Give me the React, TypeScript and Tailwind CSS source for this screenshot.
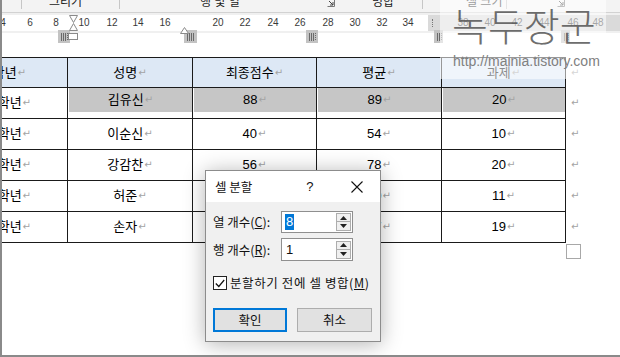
import React from "react";

const F = "font-['Liberation_Sans','Noto_Sans_CJK_KR',sans-serif]";

function PM() {
  return <span className="text-[#a3a3a3] text-[10px] leading-none ml-[1px] font-['DejaVu_Sans',sans-serif]">↵</span>;
}

function GridMark({ x, w = 12 }: { x: number; w?: number }) {
  return (
    <div className="absolute top-[17px]" style={{ left: x }}>
      <svg width={w} height={13} viewBox={`0 0 ${w} 13`}>
        <rect x="0" y="0" width={w} height="13" fill="#c3c3c3" />
        {[3, 5, 7, 9].filter((v) => v < w - 1).map((v) => (
          <line key={"v" + v} x1={v + 0.5} y1="3" x2={v + 0.5} y2="11" stroke="#6a6a6a" strokeWidth="1" strokeDasharray="1 1" />
        ))}
        {[4, 6, 8, 10].map((v) => (
          <line key={"h" + v} x1="3" y1={v + 0.5} x2={w - 3} y2={v + 0.5} stroke="#6a6a6a" strokeWidth="1" strokeDasharray="1 1" />
        ))}
      </svg>
    </div>
  );
}

const rulerNums: [number, string][] = [
  [3, "4"], [30, "6"], [56, "8"], [84, "10"], [112, "12"], [138, "14"], [165, "16"],
  [218, "20"], [245, "22"], [273, "24"], [300, "26"], [328, "28"], [355, "30"], [382, "32"],
  [408, "34"], [463, "38"], [490, "40"], [517, "42"], [544, "44"], [573, "46"], [598, "48"],
];

const widths = ["w-[109px]", "w-[125px]", "w-[124px]", "w-[125px]", "w-[124px]"];

const rows: string[][] = [
  ["1학년", "김유신", "88", "89", "20"],
  ["2학년", "이순신", "40", "54", "10"],
  ["3학년", "강감찬", "56", "78", "20"],
  ["1학년", "허준", "65", "70", "11"],
  ["2학년", "손자", "77", "67", "19"],
];

function Launcher() {
  return (
    <svg width="8" height="8" viewBox="0 0 8 8">
      <path d="M0.5 0.5 H7.5 V7.5 H0.5" fill="none" stroke="#777" strokeWidth="1" />
      <path d="M2 2 L6 6 M6 3 V6 H3" fill="none" stroke="#444" strokeWidth="1" />
    </svg>
  );
}

function Spinner() {
  return (
    <div className="flex flex-col w-[15px] h-[18px] gap-0">
      <div className="h-[9px] bg-[#f0f0f0] border border-[#adadad] flex items-center justify-center">
        <svg width="7" height="4" viewBox="0 0 7 4"><polygon points="0,4 3.5,0 7,4" fill="#222" /></svg>
      </div>
      <div className="h-[9px] bg-[#f0f0f0] border border-[#adadad] border-t-0 flex items-center justify-center">
        <svg width="7" height="4" viewBox="0 0 7 4"><polygon points="0,0 3.5,4 7,0" fill="#222" /></svg>
      </div>
    </div>
  );
}

export default function App() {
  return (
    <div className={`relative w-[620px] h-[357px] overflow-hidden bg-white ${F}`}>
      {/* ribbon */}
      <div className="flex h-[13px] bg-[#f3f3f3] border-b border-[#d2d2d2] overflow-hidden text-[12px] text-[#222]">
        <div className="w-[22px] shrink-0 h-[9px] border-r border-[#c6c6c6]" />
        <div className="w-[98px] shrink-0 h-[9px] border-r border-[#c6c6c6] flex justify-center">
          <span className="leading-[14px] -mt-[5px] -ml-[10px]">그리기</span>
        </div>
        <div className="w-[218px] shrink-0 h-[9px] flex items-start">
          <span className="leading-[14px] -mt-[5px] ml-[80px]">행 및 열</span>
          <div className="ml-auto mr-[3px] -mt-[1px]"><Launcher /></div>
        </div>
        <div className="w-[85px] shrink-0 h-[9px] border-r border-[#c6c6c6] flex">
          <span className="leading-[14px] -mt-[5px] ml-[34px]">병합</span>
        </div>
        <div className="w-[84px] shrink-0 h-[9px] border-r border-[#c6c6c6] flex">
          <span className="leading-[14px] -mt-[5px] ml-[43px]">셀 크기</span>
        </div>
        <div className="flex-1 h-[9px] flex">
          <div className="ml-[50px] -mt-[1px]"><Launcher /></div>
        </div>
      </div>

      {/* ruler */}
      <div className="relative h-[20px] bg-[#f0f0f0]">
        <div className="absolute left-0 top-[2px] w-[428px] h-[16px] bg-white" />
        <div className="absolute left-[428px] top-[2px] right-0 h-[16px] bg-[#dadada]" />
        <div className="absolute left-[432px] top-[6px] h-[8px] border-l border-dotted border-[#777]" />
        {rulerNums.map(([x, n]) => (
          <span key={n} className="absolute top-[4px] -translate-x-1/2 text-[10px] leading-[12px] text-[#3a3a3a]" style={{ left: x }}>
            {n}
          </span>
        ))}
        <GridMark x={58} />
        <GridMark x={184} w={13} />
        <GridMark x={306} />
        <GridMark x={434} w={9} />
        <GridMark x={561} w={9} />
        <svg className="absolute left-[67px] top-[2px]" width="12" height="26" viewBox="0 0 12 26">
          <polygon points="2.5,0.5 10.5,0.5 6.5,7.5" fill="#fff" stroke="#8a8a8a" />
          <polygon points="6.5,8.5 10.5,15.5 2.5,15.5" fill="#fff" stroke="#8a8a8a" />
          <rect x="1.5" y="18.5" width="9" height="6" fill="#fff" stroke="#8a8a8a" />
        </svg>
        <svg className="absolute left-[180px] top-[14px]" width="9" height="7" viewBox="0 0 9 7">
          <polygon points="0.5,6.5 4.5,0.5 8.5,6.5" fill="#fff" stroke="#8a8a8a" />
        </svg>
      </div>

      {/* table */}
      <div className="mt-[24px] -ml-[41px] w-[680px] text-[13px] text-black">
        <div className="w-[607px] border-t border-[#1a1a1a]">
          <div className="flex h-[30px] border-b border-[#1a1a1a]">
            {["학년", "성명", "최종점수", "평균", "과제"].map((h, i) => (
              <div
                key={h}
                className={`${widths[i]} shrink-0 border-r border-[#1a1a1a] bg-[#dde8f5] flex items-center ${i === 0 ? "justify-end pr-[41px]" : "justify-center"}`}
              >
                <span className="leading-[16px]">{h}</span>
                <PM />
              </div>
            ))}
            <div className="shrink-0 flex items-center pl-[4px]"><PM /></div>
          </div>
          {rows.map((r, ri) => (
            <div key={ri} className="flex h-[31px] border-b border-[#1a1a1a]">
              {r.map((c, i) => (
                <div key={i} className={`${widths[i]} shrink-0 border-r border-[#1a1a1a] flex flex-col`}>
                  <div
                    className={`flex items-center ${ri === 0 && i > 0 ? "h-[24px] ml-[1px] bg-[#c6c6c6]" : "h-[30px]"} ${i === 0 ? "justify-end pr-[36px]" : "justify-center"}`}
                  >
                    <span className="leading-[16px]">{c}</span>
                    <PM />
                  </div>
                </div>
              ))}
              <div className="shrink-0 flex items-center pl-[4px] h-[30px]"><PM /></div>
            </div>
          ))}
        </div>
        <div className="ml-[607px] mt-[1px] w-[15px] h-[15px] border border-[#a8a8a8] bg-white" />
      </div>

      {/* watermark */}
      <div className="absolute left-[440px] top-0 w-[166px] h-[79px] bg-white/55" />
      <div className="absolute left-[452px] top-[3px] text-[39px] leading-[42px] text-[#555] font-['Noto_Sans_CJK_KR',sans-serif] font-light opacity-85">
        녹두장군
      </div>
      <div className="absolute left-[453px] top-[53px] text-[14px] leading-[16px] text-[#808080] font-['Liberation_Sans',sans-serif]">
        http://mainia.tistory.com
      </div>

      {/* dialog */}
      <div className="absolute left-[205px] top-[170px] w-[176px] h-[172px] bg-[#f0f0f0] border border-[#8c8c8c] shadow-[0_2px_20px_rgba(0,0,0,0.3)] flex flex-col text-[12.5px] text-[#111] font-['Noto_Sans_CJK_KR',sans-serif]">
        <div className="h-[31px] bg-white flex items-center pl-[9px]">
          <span className="leading-[16px]">셀 분할</span>
          <span className="ml-[54px] leading-[16px] font-['Liberation_Sans',sans-serif] text-[13px]">?</span>
          <svg className="ml-[37px]" width="12" height="12" viewBox="0 0 12 12">
            <path d="M0.5 0.5 L11.5 11.5 M11.5 0.5 L0.5 11.5" stroke="#111" strokeWidth="1.1" />
          </svg>
        </div>
        <div className="flex flex-col pl-[7px] pt-[9px]">
          <div className="flex items-center h-[22px]">
            <span className="w-[68px] leading-[16px]">열 개수(<u>C</u>):</span>
            <div className="w-[72px] h-[22px] bg-white border border-[#8f8f8f] flex items-center pl-[3px] pr-[1px]">
              <span className="bg-[#0078d7] text-white text-[13px] leading-[16px] px-[1px] font-['Liberation_Sans',sans-serif]">8</span>
              <div className="ml-auto"><Spinner /></div>
            </div>
          </div>
          <div className="flex items-center h-[23px] mt-[5px]">
            <span className="w-[68px] leading-[16px]">행 개수(<u>R</u>):</span>
            <div className="w-[72px] h-[23px] bg-white border border-[#8f8f8f] flex items-center pl-[4px] pr-[1px]">
              <span className="text-[13px] leading-[16px] font-['Liberation_Sans',sans-serif]">1</span>
              <div className="ml-auto"><Spinner /></div>
            </div>
          </div>
          <div className="flex items-center mt-[15px] h-[14px]">
            <div className="w-[14px] h-[14px] border border-[#222] bg-white flex items-center justify-center">
              <svg width="10" height="9" viewBox="0 0 10 9">
                <polyline points="0.8,4.5 3.8,7.5 9.2,1" fill="none" stroke="#111" strokeWidth="1.2" />
              </svg>
            </div>
            <span className="ml-[3px] leading-[16px] tracking-[0.6px]">분할하기 전에 셀 병합(<u>M</u>)</span>
          </div>
          <div className="flex mt-[18px] gap-[10px]">
            <div className="w-[74px] h-[24px] bg-[#e1e1e1] border-2 border-[#0078d7] flex items-center justify-center leading-[16px]">확인</div>
            <div className="w-[75px] h-[24px] bg-[#e1e1e1] border border-[#adadad] flex items-center justify-center leading-[16px]">취소</div>
          </div>
        </div>
      </div>

      {/* frame */}
      <div className="absolute inset-0 border-l-2 border-b-2 border-[#8a8a8a] pointer-events-none" />
    </div>
  );
}
